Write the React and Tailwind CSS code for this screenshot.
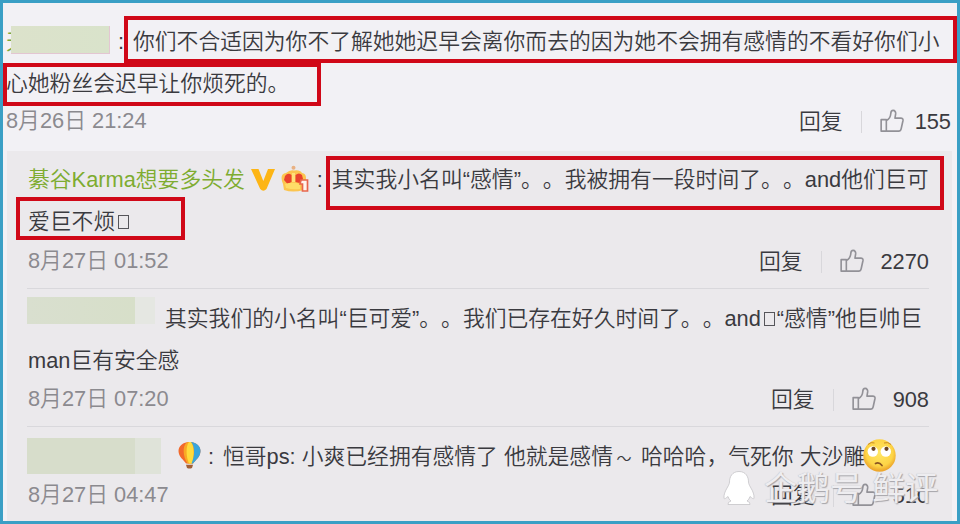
const FONT =
  "font-['Liberation_Sans','Noto_Sans_CJK_SC',sans-serif] text-[21.8px] font-[350] [text-spacing-trim:space-all]";

function Thumb() {
  return (
    <svg className="h-6 w-6 shrink-0" viewBox="0 0 25 24" fill="none" stroke="#929197" strokeWidth="1.7" strokeLinejoin="round">
      <path d="M1.2 10.5H6.6V22.6H1.2Z" />
      <path d="M6.6 11.5C9.6 10 11 7.4 11.2 4.4C11.3 2 12.3 1 13.7 1C15.6 1 16.5 2.6 16.3 4.6L15.6 9H21.6C23.4 9 24.2 10 23.9 11.7L22 20.3C21.7 21.9 20.9 22.6 19.4 22.6H6.6" />
    </svg>
  );
}

function VBadge() {
  return (
    <svg className="h-6 w-6 shrink-0" viewBox="0 0 24 24">
      <path d="M0 1H7.5L12.3 13L17 1H24L15.5 21Q12.3 24.5 9.2 21Z" fill="#fdb515" />
    </svg>
  );
}

function Crown() {
  return (
    <svg className="h-[27px] w-[28px] shrink-0" viewBox="0 0 28 27">
      <circle cx="12.5" cy="2.7" r="2" fill="#e9b183" />
      <path d="M3 25L2 19Q-2 9 5 8Q9 4.5 13 5.5Q19 4.5 21 8Q27 9 24 18L22.5 25Q12 28 3 25Z" fill="#fcc54f" />
      <path d="M4 11Q7 7 10.5 10V17L6.5 19L3 15ZM14.5 10Q18 7 21 10L22 14L18.5 18L14.5 17Z" fill="#e9422d" />
      <path d="M12.5 8V17" stroke="#ffe07a" strokeWidth="3" />
      <path d="M4 19Q12 16.5 19 19V24Q12 25 5 23Z" fill="#ffdc68" />
      <path d="M20 15H26.5V26H21.5V19H19Z" fill="#fff4ed" stroke="#e8664c" strokeWidth="1.7" />
    </svg>
  );
}

function Balloon() {
  return (
    <svg className="h-[27px] w-[23px] shrink-0" viewBox="0 0 23 27">
      <path d="M0.5 9C0.5 4 5 0 11.5 0S22.5 4 22.5 9C22.5 15 17.5 18 15 21.5H8C6 18 0.5 15 0.5 9Z" fill="#f2692b" />
      <path d="M9 0.3C4 4 5 15 9.5 21.5H15C17 18 19 15 19 9C19 4 16 1 13 0Z" fill="#f9a825" />
      <path d="M11 0C7.5 4 8 15 11 21.5H14C16 15 16.5 5 13 0Z" fill="#ffdb3b" />
      <path d="M13 0C17 4 17 14 13.5 21.5H15C17.5 18 22.5 15 22.5 9C22.5 4 18 0.5 13 0Z" fill="#38a5dc" />
      <path d="M8 22.8H15L14 26Q11.5 27.2 9 26Z" fill="#a35f35" />
    </svg>
  );
}

function RollingEyes() {
  return (
    <svg className="h-[33px] w-[33px] shrink-0" viewBox="0 0 33 33">
      <defs>
        <radialGradient id="face" cx="50%" cy="42%" r="55%">
          <stop offset="0" stopColor="#ffe764" />
          <stop offset="0.75" stopColor="#fdd446" />
          <stop offset="1" stopColor="#eda72c" />
        </radialGradient>
      </defs>
      <circle cx="16.5" cy="16.5" r="16.2" fill="url(#face)" />
      <circle cx="9.8" cy="12.5" r="5.2" fill="#fff" />
      <circle cx="22.8" cy="12.5" r="5.2" fill="#fff" />
      <circle cx="10.5" cy="9.8" r="2.1" fill="#6b4523" />
      <circle cx="23.5" cy="9.8" r="2.1" fill="#6b4523" />
      <path d="M5 5.5Q8 2.5 11.5 4M21 4Q25 2.5 28 5.5" stroke="#c98a25" strokeWidth="1" fill="none" />
      <path d="M12.5 24.5Q16 22.5 19 26.5" stroke="#8a5423" strokeWidth="1.7" fill="none" strokeLinecap="round" />
    </svg>
  );
}

function Tofu() {
  return <span className="mr-[2px] ml-[3px] inline-block h-[14px] w-[11px] border border-[#55555a]" />;
}

function Meta({ date, likes, className, gap = "ml-[17px]" }) {
  return (
    <div className={`flex items-center ${className}`}>
      <span className="mr-auto -mt-[2px] text-[#8b8a8f]">{date}</span>
      <span>回复</span>
      <span className="ml-[18px] h-[22px] w-px bg-[#d8d7db]" />
      <span className="ml-[18px] -mt-[2px] flex"><Thumb /></span>
      <span className={`min-w-[36px] text-right ${gap}`}>{likes}</span>
    </div>
  );
}

export default function App() {
  return (
    <div className={`relative h-[524px] w-[960px] overflow-hidden whitespace-nowrap border-[3px] border-[#3a9fc5] bg-[#f2f1f5] leading-none text-[#3a3a3f] ${FONT}`}>
      <div className="mt-[18px] flex h-[42px] items-center pl-[3px]">
        <span className="w-[5px] overflow-hidden text-[#7da83c]">天</span>
        <span className="-mt-1 h-7 w-[99px] border-r border-b border-[#e3c6d2] bg-gradient-to-r from-[#dce2cb] to-[#d9e3cb]" />
        <span className="ml-[8px] w-[15px]">:</span>
        <span>你们不合适因为你不了解她她迟早会离你而去的因为她不会拥有感情的不看好你们小</span>
      </div>
      <div className="flex h-[42px] items-center pl-[3px]">心她粉丝会迟早让你烦死的。</div>
      <Meta date="8月26日 21:24" likes="155" gap="ml-[11px]" className="h-[34px] pr-[6px] pl-[3px]" />

      <div className="mt-[12px] mr-[5px] ml-[4px] h-[370px] bg-[#ebe9ec] pr-[23px] pl-[20px]">
        <div className="flex h-[50px] items-center pt-[8px] pl-px">
          <span className="text-[#7eac30]">綦谷Karma想要多头发</span>
          <span className="ml-[6px] flex"><VBadge /></span>
          <span className="ml-[6px] -mt-1 flex"><Crown /></span>
          <span className="ml-[8px] w-[15px]">:</span>
          <span className="tracking-[0.03px]">其实我小名叫“感情”。。我被拥有一段时间了。。and他们巨可</span>
        </div>
        <div className="flex h-[42px] items-center pl-px">爱巨不烦<Tofu /></div>
        <Meta date="8月27日 01:52" likes="2270" className="h-[37px] pl-px" />
        <div className="mt-[8px] h-px bg-[#d9d8dc]" />
        <div className="mt-[9px] flex h-[42px] items-center">
          <span className="-mt-[18px] h-[27px] w-[108px] bg-gradient-to-r from-[#d9dfcf] to-[#d7dfc9]" />
          <span className="-mt-[18px] h-[27px] w-[20px] bg-[#e5e7e2]" />
          <span className="ml-[10px]">其实我们的小名叫“巨可爱”。。我们已存在好久时间了。。and<Tofu />“感情”他巨帅巨</span>
        </div>
        <div className="flex h-[42px] items-center pl-px">man巨有安全感</div>
        <Meta date="8月27日 07:20" likes="908" className="h-[35px] pl-px" />
        <div className="mt-[9px] h-px bg-[#d9d8dc]" />
        <div className="mt-[9px] flex h-[42px] items-center">
          <span className="-mt-[2px] h-[36px] w-[108px] bg-[#d7ddcb]" />
          <span className="-mt-[2px] h-[36px] w-[26px] bg-[#dfe3d9]" />
          <span className="-mt-1 ml-[17px] flex"><Balloon /></span>
          <span className="ml-[7px] w-[15px]">:</span>
          <span>恒哥ps: 小爽已经拥有感情了 他就是感情<span className="inline-block w-[22px] text-center text-[15px]">～</span> 哈哈哈，气死你 大沙雕</span>
          <span className="-mt-1 -ml-[2px] flex"><RollingEyes /></span>
        </div>
        <Meta date="8月27日 04:47" likes="510" className="h-[35px] pl-px" />
      </div>

      <div className="absolute top-[13px] left-[121px] h-[47px] w-[833px] border-4 border-[#d00818]" />
      <div className="absolute top-[60px] left-0 h-[43px] w-[318px] border-4 border-[#d00818]" />
      <div className="absolute top-[153px] left-[323px] h-[54px] w-[618px] border-4 border-[#d00818]" />
      <div className="absolute top-[194px] left-[13px] h-[43px] w-[169px] border-4 border-[#d00818]" />

      <div className="absolute top-[467px] left-[719px] flex items-center text-[33px] font-normal text-[#eeedf0] [text-shadow:1px_1px_1px_#a5a4a9,-0.5px_-0.5px_1px_#c5c4c8]">
        <svg className="h-[36px] w-[34px]" viewBox="0 0 34 36">
          <path d="M17 1.5C10 1.5 7.5 7 7.5 12C7.5 16 1.5 21 2 28C2.2 30 4.5 27.5 6 26.5Q6.8 29.5 9 31Q5.5 32 6 34.5H28Q28.5 32 25 31Q27.2 29.5 28 26.5C29.5 27.5 31.8 30 32 28C32.5 21 26.5 16 26.5 12C26.5 7 24 1.5 17 1.5Z" fill="#fff" stroke="#c5c4c8" strokeWidth="0.8" />
        </svg>
        <span className="ml-[8px]">企鹅号 鲜评</span>
      </div>
    </div>
  );
}
